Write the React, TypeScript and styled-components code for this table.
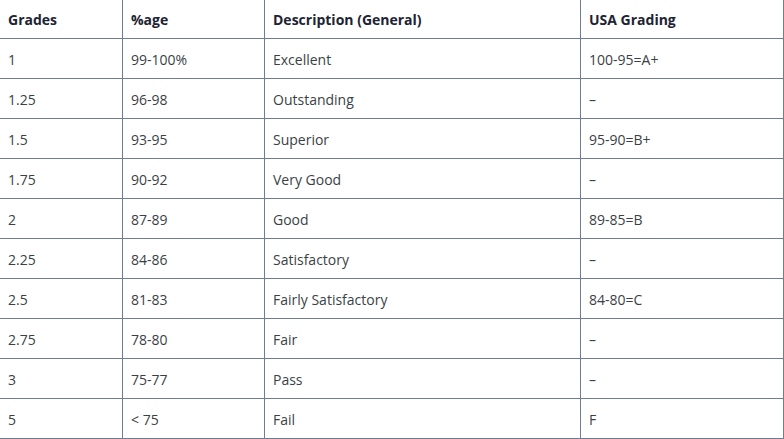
import React from "react";
import styled, { createGlobalStyle } from "styled-components";

const Global = createGlobalStyle`
  html, body { margin: 0; padding: 0; background: #ffffff; }
  body { overflow: hidden; }
`;

const Wrap = styled.div`
  width: 784px;
  height: 439px;
  overflow: hidden;
  background: #fff;
`;

const Table = styled.table`
  border-collapse: collapse;
  table-layout: fixed;
  width: 784px;
  margin: -2px 0 0 -1px;
  font-family: "Open Sans", "Noto Sans", sans-serif;
  font-size: 14px;
`;

const Col = styled.col<{ $w: number }>`
  width: ${(p) => p.$w}px;
`;

const Th = styled.th`
  border: 1px solid #6f7c93;
  height: 40px;
  padding: 1px 8px 0;
  text-align: left;
  font-weight: 700;
  color: #1d2333;
  box-sizing: border-box;
`;

const Td = styled.td`
  border: 1px solid #6f7c93;
  height: 40px;
  padding: 2px 8px 0;
  text-align: left;
  font-weight: 400;
  color: #3b3f46;
  box-sizing: border-box;
`;

const widths = [123, 142, 316, 203];

const rows: [string, string, string, string][] = [
  ["1", "99-100%", "Excellent", "100-95=A+"],
  ["1.25", "96-98", "Outstanding", "–"],
  ["1.5", "93-95", "Superior", "95-90=B+"],
  ["1.75", "90-92", "Very Good", "–"],
  ["2", "87-89", "Good", "89-85=B"],
  ["2.25", "84-86", "Satisfactory", "–"],
  ["2.5", "81-83", "Fairly Satisfactory", "84-80=C"],
  ["2.75", "78-80", "Fair", "–"],
  ["3", "75-77", "Pass", "–"],
  ["5", "< 75", "Fail", "F"],
];

export default function App() {
  return (
    <Wrap>
      <Global />
      <Table>
        <colgroup>
          {widths.map((w, i) => (
            <Col key={i} $w={w} />
          ))}
        </colgroup>
        <thead>
          <tr>
            <Th>Grades</Th>
            <Th>%age</Th>
            <Th>Description (General)</Th>
            <Th>USA Grading</Th>
          </tr>
        </thead>
        <tbody>
          {rows.map((r, i) => (
            <tr key={i}>
              {r.map((c, j) => (
                <Td key={j}>{c}</Td>
              ))}
            </tr>
          ))}
        </tbody>
      </Table>
    </Wrap>
  );
}
